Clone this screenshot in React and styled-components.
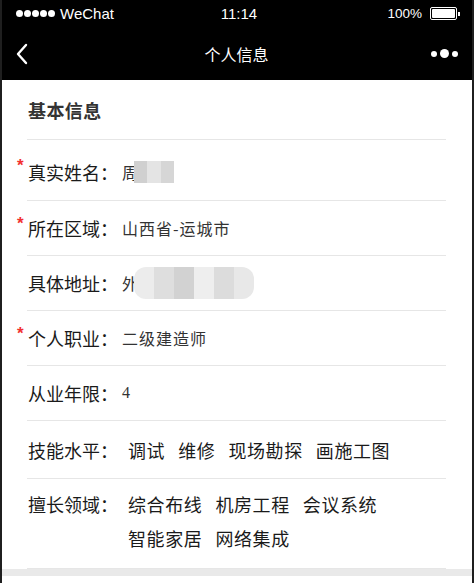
import styled, { createGlobalStyle } from 'styled-components'

const GlobalStyle = createGlobalStyle`
  html, body {
    margin: 0;
    padding: 0;
    background: #fff;
  }
  body {
    font-family: "Liberation Sans", "Noto Sans CJK SC", sans-serif;
  }
`

const skills = ['调试', '维修', '现场勘探', '画施工图']
const domains = ['综合布线', '机房工程', '会议系统', '智能家居', '网络集成']

function App() {
  return (
    <Page>
      <GlobalStyle />
      <StatusBar>
        <Carrier>
          <Signal>
            {[0, 1, 2, 3, 4].map((i) => (
              <Dot key={i} />
            ))}
          </Signal>
          WeChat
        </Carrier>
        <Clock>11:14</Clock>
        <BatteryGroup>
          100%
          <Battery>
            <BatteryFill />
          </Battery>
          <BatteryTip />
        </BatteryGroup>
      </StatusBar>

      <NavBar>
        <BackButton>
          <svg width="14" height="22" viewBox="0 0 14 22">
            <path d="M11 2 L3 11 L11 20" fill="none" stroke="#fff" strokeWidth="2.4" strokeLinecap="round" strokeLinejoin="round" />
          </svg>
        </BackButton>
        <NavTitle>个人信息</NavTitle>
        <MoreButton>
          <MoreDot size={6} />
          <MoreDot size={9} />
          <MoreDot size={6} />
        </MoreButton>
      </NavBar>

      <Card>
        <CardTitle>基本信息</CardTitle>

        <Row height={61} pad={4}>
          <Required>*</Required>
          <Label>真实姓名：</Label>
          <Value>周</Value>
          <Mosaic width={40} height={22}>
            <Cell tone="#d0d0d0" />
            <Cell tone="#e4e4e4" />
            <Cell tone="#d6d6d6" />
          </Mosaic>
        </Row>

        <Row height={55}>
          <Required>*</Required>
          <Label>所在区域：</Label>
          <Value>山西省-运城市</Value>
        </Row>

        <Row height={55}>
          <Label>具体地址：</Label>
          <Value>外</Value>
          <Mosaic width={120} height={32} round>
            <Cell tone="#ececec" />
            <Cell tone="#dedede" />
            <Cell tone="#d2d2d2" />
            <Cell tone="#eeeeee" />
            <Cell tone="#dcdcdc" />
            <Cell tone="#e8e8e8" />
          </Mosaic>
        </Row>

        <Row height={55}>
          <Required>*</Required>
          <Label>个人职业：</Label>
          <Value>二级建造师</Value>
        </Row>

        <Row height={55}>
          <Label>从业年限：</Label>
          <Value serif>4</Value>
        </Row>

        <Row height={58}>
          <Label>技能水平：</Label>
          <Tags>
            {skills.map((s) => (
              <Tag key={s}>{s}</Tag>
            ))}
          </Tags>
        </Row>

        <Row height={90} top>
          <Label>擅长领域：</Label>
          <Tags>
            {domains.map((s) => (
              <Tag key={s}>{s}</Tag>
            ))}
          </Tags>
        </Row>
      </Card>
      <Footer />
    </Page>
  )
}

export default App

const Page = styled.div`
  width: 474px;
  min-height: 583px;
  box-sizing: border-box;
  border-left: 2px solid #1f1f1f;
  border-right: 2px solid #1f1f1f;
  display: flex;
  flex-direction: column;
  background: #fff;
`

const StatusBar = styled.div`
  height: 27px;
  background: #000;
  color: #fff;
  display: grid;
  grid-template-columns: 1fr auto 1fr;
  align-items: center;
  padding: 0 12px 0 14px;
  font-family: "Liberation Sans", Arial, sans-serif;
  font-size: 15px;
`

const Carrier = styled.div`
  display: flex;
  align-items: center;
  gap: 5px;
`

const Signal = styled.div`
  display: flex;
  gap: 1px;
`

const Dot = styled.span`
  width: 7px;
  height: 7px;
  border-radius: 50%;
  background: #fff;
`

const Clock = styled.div`
  font-size: 15px;
  margin-left: 2px;
`

const BatteryGroup = styled.div`
  display: flex;
  align-items: center;
  justify-content: flex-end;
  font-size: 13.5px;
`

const Battery = styled.div`
  width: 23px;
  height: 9px;
  margin-left: 8px;
  border: 1px solid #fff;
  border-radius: 2px;
  padding: 1px;
  display: flex;
`

const BatteryFill = styled.div`
  flex: 1;
  background: #fff;
  border-radius: 1px;
`

const BatteryTip = styled.div`
  width: 2px;
  height: 4px;
  background: #fff;
  margin-left: 1px;
`

const NavBar = styled.div`
  height: 53px;
  background: #000;
  display: grid;
  grid-template-columns: 1fr auto 1fr;
  align-items: center;
  padding: 0 14px 0 13px;
`

const BackButton = styled.div`
  display: flex;
  align-items: center;
  padding-top: 1px;
`

const NavTitle = styled.div`
  color: #fff;
  font-family: "Noto Sans CJK SC", sans-serif;
  font-size: 16px;
  padding-top: 1px;
`

const MoreButton = styled.div`
  display: flex;
  align-items: center;
  justify-content: flex-end;
  gap: 3px;
`

const MoreDot = styled.span`
  width: ${(p) => p.size}px;
  height: ${(p) => p.size}px;
  border-radius: 50%;
  background: #fff;
`

const Card = styled.div`
  background: #fff;
  padding: 0 26px 0 25px;
  display: flex;
  flex-direction: column;
`

const CardTitle = styled.div`
  height: 58px;
  display: flex;
  align-items: center;
  padding: 1px 0 0 1px;
  border-bottom: 1px solid #e6e6e6;
  font-family: "Noto Sans CJK SC", sans-serif;
  font-weight: 700;
  font-size: 18px;
  letter-spacing: 0.4px;
  color: #333;
`

const Row = styled.div`
  position: relative;
  box-sizing: border-box;
  height: ${(p) => p.height}px;
  display: flex;
  align-items: ${(p) => (p.top ? 'flex-start' : 'center')};
  padding-top: ${(p) => (p.top ? 13 : p.pad || 0)}px;
  border-bottom: 1px solid #e6e6e6;
  padding-left: 1px;
`

const Required = styled.span`
  position: absolute;
  left: -10px;
  top: 50%;
  margin-top: -13px;
  color: #f23030;
  font-family: "Liberation Sans", sans-serif;
  font-weight: 700;
  font-size: 17px;
  line-height: 17px;
`

const Label = styled.span`
  flex: none;
  font-family: "Noto Sans CJK SC", sans-serif;
  font-size: 18px;
  line-height: 24px;
  color: #1a1a1a;
`

const Value = styled.span`
  margin-left: 4px;
  font-family: ${(p) => (p.serif ? '"Liberation Serif", serif' : '"Noto Sans CJK SC", sans-serif')};
  font-size: 16px;
  letter-spacing: 1px;
  color: #333;
`

const Mosaic = styled.span`
  display: flex;
  width: ${(p) => p.width}px;
  height: ${(p) => p.height}px;
  margin-left: -5px;
  border-radius: ${(p) => (p.round ? '12px' : '0')};
  overflow: hidden;
  filter: blur(0.6px);
`

const Cell = styled.span`
  flex: 1;
  background: ${(p) => p.tone};
`

const Tags = styled.div`
  display: flex;
  flex-wrap: wrap;
  column-gap: 13px;
  row-gap: 10px;
  margin-left: 10px;
`

const Tag = styled.span`
  font-family: "Noto Sans CJK SC", sans-serif;
  font-size: 18px;
  letter-spacing: 0.6px;
  line-height: 24px;
  color: #1a1a1a;
`

const Footer = styled.div`
  height: 7px;
  background: #e9e9e9;
`
